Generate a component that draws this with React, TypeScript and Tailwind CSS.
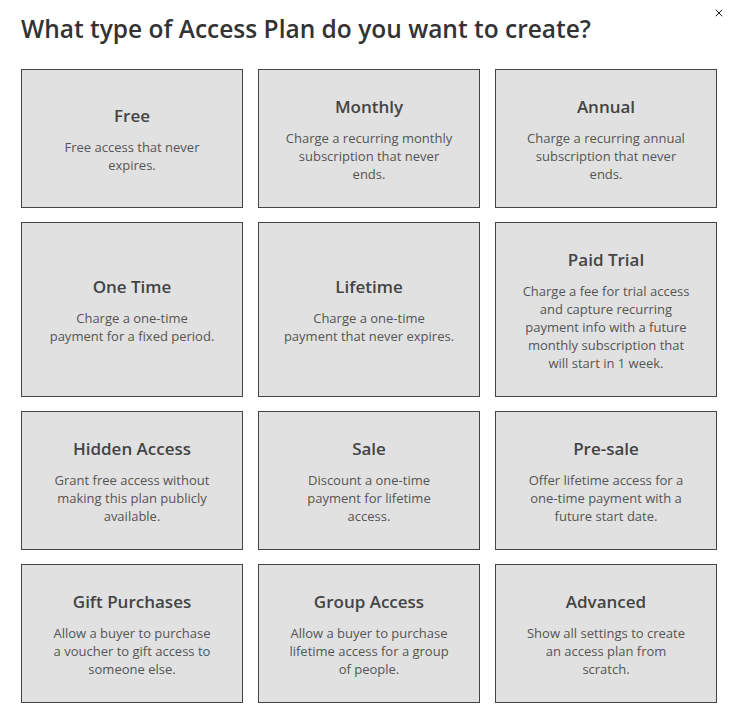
import { X } from 'lucide-react';

type Plan = {
  title: string;
  lines: string[];
};

// line breaks kept as in the design
const plans: Plan[] = [
  { title: 'Free', lines: ['Free access that never', 'expires.'] },
  { title: 'Monthly', lines: ['Charge a recurring monthly', 'subscription that never', 'ends.'] },
  { title: 'Annual', lines: ['Charge a recurring annual', 'subscription that never', 'ends.'] },
  { title: 'One Time', lines: ['Charge a one-time', 'payment for a fixed period.'] },
  { title: 'Lifetime', lines: ['Charge a one-time', 'payment that never expires.'] },
  {
    title: 'Paid Trial',
    lines: [
      'Charge a fee for trial access',
      'and capture recurring',
      'payment info with a future',
      'monthly subscription that',
      'will start in 1 week.',
    ],
  },
  { title: 'Hidden Access', lines: ['Grant free access without', 'making this plan publicly', 'available.'] },
  { title: 'Sale', lines: ['Discount a one-time', 'payment for lifetime', 'access.'] },
  { title: 'Pre-sale', lines: ['Offer lifetime access for a', 'one-time payment with a', 'future start date.'] },
  { title: 'Gift Purchases', lines: ['Allow a buyer to purchase', 'a voucher to gift access to', 'someone else.'] },
  { title: 'Group Access', lines: ['Allow a buyer to purchase', 'lifetime access for a group', 'of people.'] },
  { title: 'Advanced', lines: ['Show all settings to create', 'an access plan from', 'scratch.'] },
];

const PlanCard = ({ plan }: { plan: Plan }) => (
  <button
    type="button"
    className="flex flex-col items-center justify-center border border-[#444] bg-[#e1e1e1] px-4 pb-6 pt-[25px] text-center"
  >
    <span className="text-[17px] font-semibold leading-6 text-[#444]">{plan.title}</span>
    <span className="mt-2.5 flex flex-col text-[13px] leading-[18px] text-[#555]">
      {plan.lines.map((line) => (
        <span key={line} className="whitespace-nowrap">
          {line}
        </span>
      ))}
    </span>
  </button>
);

export default function App() {
  return (
    <div className="relative min-h-[720px] w-[730px] bg-white px-[21px] pt-[13px] font-['Open_Sans',sans-serif]">
      <button
        type="button"
        className="absolute right-[5px] top-[7px] text-[#222]"
        aria-label="Close"
      >
        <X className="h-3 w-3" strokeWidth={2} />
      </button>

      <h1 className="text-[24.5px] font-semibold leading-8 text-[#333]">
        What type of Access Plan do you want to create?
      </h1>

      <div className="mt-[24px] grid w-[696px] grid-cols-3 gap-x-[15px] gap-y-[14px]">
        {plans.map((plan) => (
          <PlanCard key={plan.title} plan={plan} />
        ))}
      </div>
    </div>
  );
}
